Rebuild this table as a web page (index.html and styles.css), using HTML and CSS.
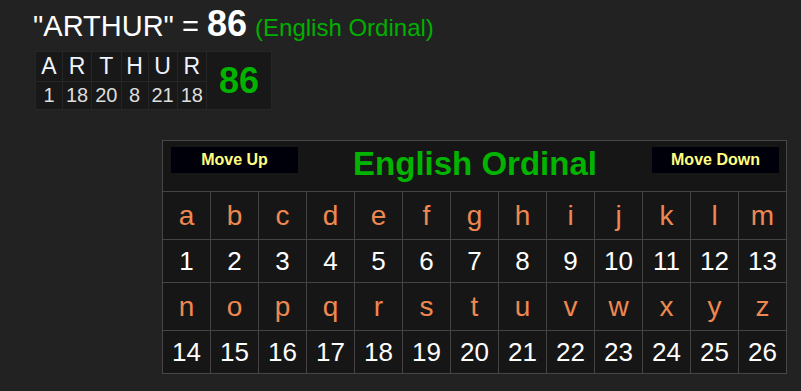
FILE: index.html
```html
<!DOCTYPE html>
<html lang="en">
<head>
  <meta charset="UTF-8">
  <title>Gematria Calculator</title>
  <link rel="stylesheet" href="styles.css">
</head>
<body>

<div class="result">
  <div class="phrase">"ARTHUR" = <b class="total">86</b> <span class="cipher-name">(English Ordinal)</span></div>

  <table class="breakdown">
    <tr>
      <td class="chr">A</td><td class="chr">R</td><td class="chr">T</td><td class="chr">H</td><td class="chr">U</td><td class="chr">R</td>
      <td class="sum" rowspan="2">86</td>
    </tr>
    <tr>
      <td class="val">1</td><td class="val">18</td><td class="val">20</td><td class="val">8</td><td class="val">21</td><td class="val">18</td>
    </tr>
  </table>
</div>

<div class="chart-wrap">
  <div class="chart" id="chart">
    <div class="chart-head">
      <button class="move">Move Up</button>
      <span class="chart-title">English Ordinal</span>
      <button class="move">Move Down</button>
    </div>
  </div>
</div>

<script>
  // letters a-z with their ordinal values, two rows of 13
  var chart = document.getElementById("chart");
  var abc = "abcdefghijklmnopqrstuvwxyz";

  for (var half = 0; half < 2; half++) {
    for (var i = 0; i < 13; i++) {
      var c = document.createElement("div");
      c.className = "cell letter";
      c.textContent = abc[half * 13 + i];
      chart.appendChild(c);
    }
    for (var j = 0; j < 13; j++) {
      var n = document.createElement("div");
      n.className = "cell num";
      n.textContent = half * 13 + j + 1;
      chart.appendChild(n);
    }
  }
</script>

</body>
</html>
```

FILE: styles.css
```css
body {
  margin: 0;
  padding: 0;
  background: #222;
  font-family: "Liberation Sans", Arial, sans-serif;
  color: white;
}

.result {
  padding: 4px 0 0 33px;
}

.phrase {
  font-size: 29px;
  line-height: 40px;
  white-space: nowrap;
}

.total {
  font-size: 36px;
}

.cipher-name {
  font-size: 24px;
  color: #00b000;
}

.breakdown {
  margin: 3px 0 0 2px;
  border-collapse: separate;
  border-spacing: 1px;
  background: #262626;
  border: none;
}

.breakdown td {
  background: #181818;
  text-align: center;
  padding: 0 3px;
  min-width: 20px;
}

.breakdown .chr {
  height: 29px;
  font-size: 23px;
  color: #eef4ff;
}

.breakdown .val {
  height: 27px;
  font-size: 20px;
  color: #ddd;
}

.breakdown .sum {
  font-size: 36px;
  font-weight: bold;
  color: #00b400;
  padding: 0 12px;
}

.chart-wrap {
  padding: 30px 0 0 162px;
}

.chart {
  display: grid;
  grid-template-columns: repeat(13, 47px);
  grid-template-rows: 50px 47px 42px 47px 42px;
  gap: 1px;
  width: max-content;
  background: #444;
  border: 1px solid #474747;
}

.chart-head {
  grid-column: 1 / -1;
  display: flex;
  justify-content: space-between;
  align-items: flex-start;
  padding: 6px 7px 0 8px;
  background: #161616;
}

.move {
  width: 127px;
  height: 26px;
  padding: 0;
  border: none;
  background: #00000a;
  color: #ffff80;
  font-family: "Liberation Sans", Arial, sans-serif;
  font-weight: bold;
  font-size: 16px;
  line-height: 26px;
  cursor: pointer;
}

.chart-title {
  font-size: 33px;
  font-weight: bold;
  line-height: 34px;
  color: #00b400;
}

.cell {
  display: flex;
  justify-content: center;
  align-items: center;
  background: #161616;
}

.letter {
  font-size: 28px;
  color: #ee8850;
}

.num {
  font-size: 26px;
  color: #fff;
}
```
